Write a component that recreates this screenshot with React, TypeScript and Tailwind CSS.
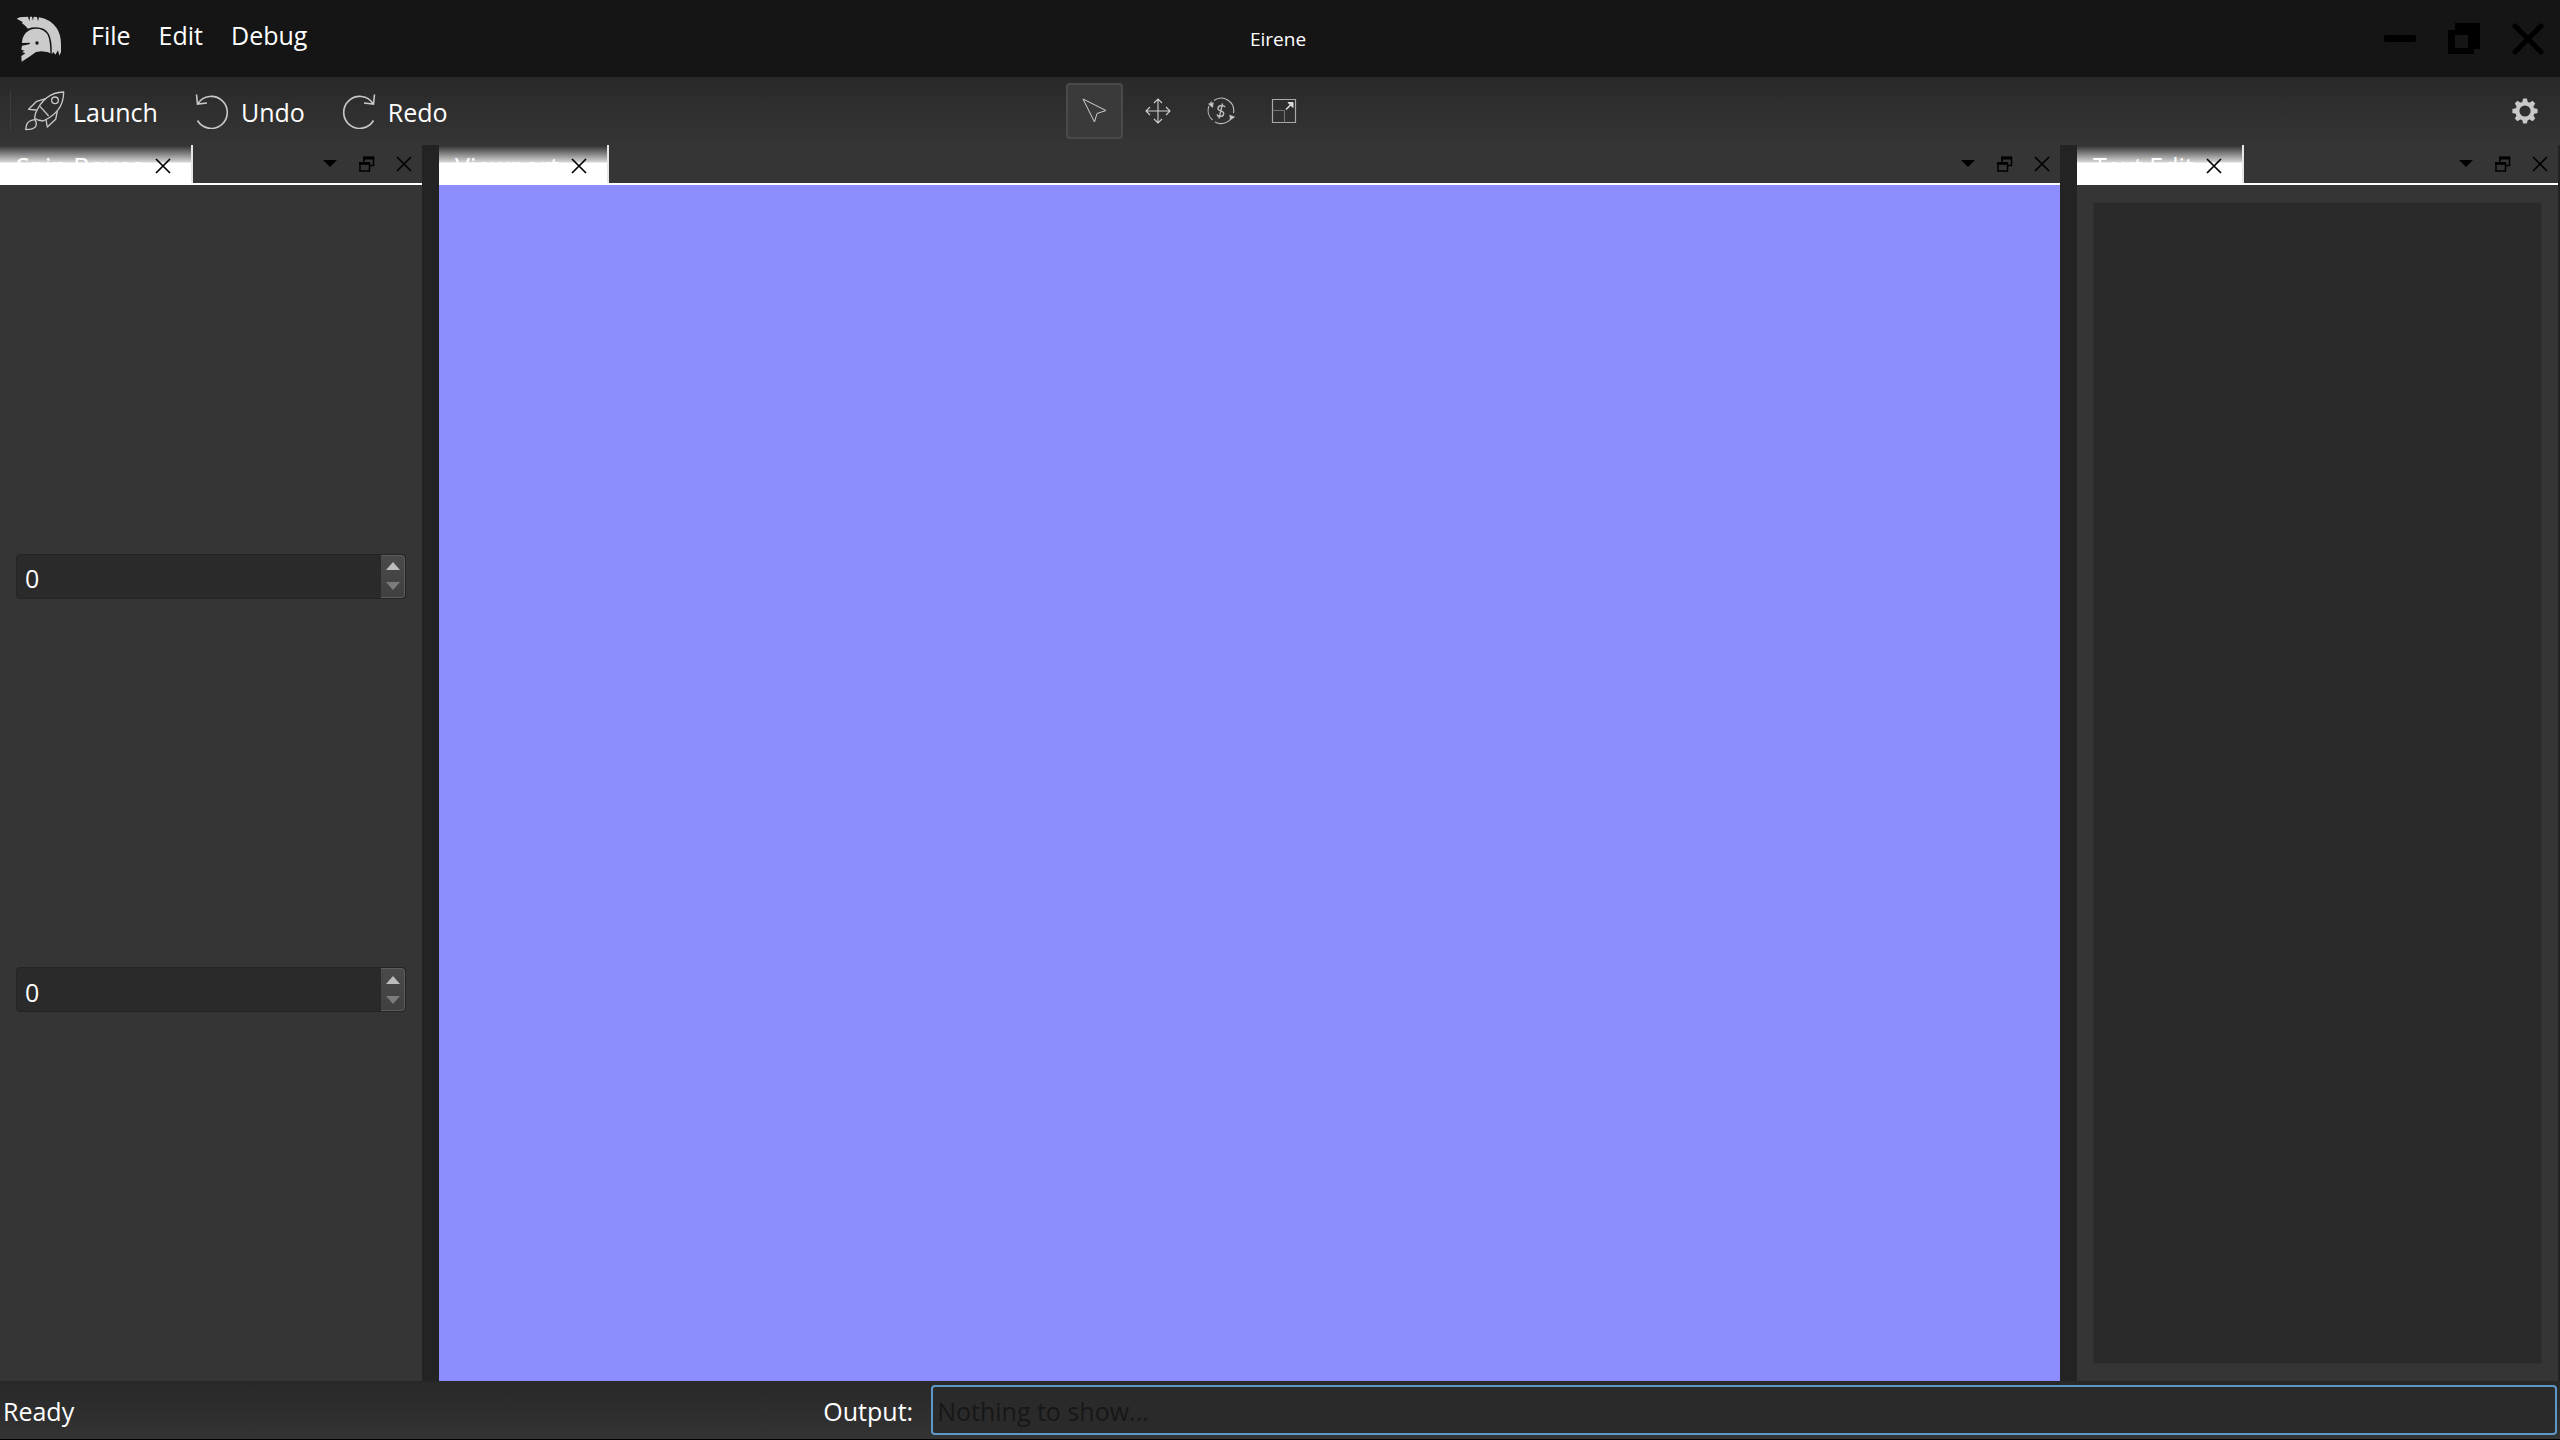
import { useState } from "react";
import type { ReactNode } from "react";

const MENUS = ["File", "Edit", "Debug"];

function HelmetLogo() {
  return (
    <svg width="46" height="46" viewBox="48 46 138 138" aria-hidden="true">
      <path
        fill="#cbcbcb"
        d="M50 54 59 50 84 48 88 62 90 48 96 48 99 60 101 48 111 49 114 62 117 50Q150 55 170 82Q183 102 183 130L183 154 178 165 174 149 166 162 160 154 155 161Q157 118 146 99Q134 80 108 80Q93 80 84 84L74 74 66 68 68 64Z"
      />
      <path
        fill="#cbcbcb"
        d="M65 183 64 166 76 158 66 154 74 150 64 147 66 135 88 131 91 126 66 127Q66 110 77 97Q90 84 108 84Q131 84 142 101Q151 118 151 158L142 154 124 152 108 154 88 168Z"
      />
      <circle cx="111" cy="127" r="5" fill="#151515" />
    </svg>
  );
}

function RocketIcon() {
  return (
    <svg width="40" height="40" viewBox="74 275 120 120" fill="none" stroke="#c8c8c8" strokeWidth="4" strokeLinejoin="round" aria-hidden="true">
      <path d="M190 278Q160 279 139 295Q117 313 105 343L103 357 113 362 128 365Q155 353 172 333Q190 311 190 278Z" />
      <circle cx="164" cy="303" r="10" />
      <path d="M136 298 109 306 85 330 108 332M171 335 166 360 141 383 137 361M119 321 145 350" />
      <path d="M104 361Q86 362 79 375L76 391Q96 391 104 384Q112 376 104 361Z" />
    </svg>
  );
}

function TurnIcon({ flip = false }: { flip?: boolean }) {
  return (
    <svg width="36" height="36" viewBox="0 0 36 36" fill="none" stroke="#c8c8c8" strokeWidth="1.6" className={flip ? "mr-[3px] -scale-x-100" : "mr-[3px]"} aria-hidden="true">
      <path d="M3.5 27.5A16 16 0 1 0 4 10.500M2.500 1.500 3.500 11 13 10" />
    </svg>
  );
}

function SelectIcon() {
  return (
    <svg width="26" height="26" viewBox="0 0 26 26" fill="none" stroke="#d0d0d0" aria-hidden="true">
      <path d="M1 1 24 12.500 15 15.500 12.500 24Z" />
    </svg>
  );
}

function MoveIcon() {
  return (
    <svg width="26" height="26" viewBox="0 0 26 26" fill="none" stroke="#d0d0d0" strokeWidth="1.1" aria-hidden="true">
      <path d="M13 1V25M1 13H25M9 5 13 1 17 5M9 21 13 25 17 21M5 9 1 13 5 17M21 9 25 13 21 17" />
    </svg>
  );
}

function RotateIcon() {
  return (
    <svg width="28" height="28" viewBox="0 0 28 28" fill="none" stroke="#bdbdbd" strokeWidth="1.1" aria-hidden="true">
      <path d="M7 3.500A12.500 12.500 0 0 1 26.500 16M25 20A12.500 12.500 0 0 1 8 25M5.500 23A12.500 12.500 0 0 1 2 9M3.500 6 4.500 4.500" />
      <path d="M2 7 6 6 5.500 10ZM23 18.500 27 20 23.500 22.500Z" fill="#d0d0d0" />
      <path d="M18 10Q17 8.500 14.500 8.500Q11.500 8.500 11 11Q10.500 13 14 14Q17.500 15 16.500 17.500Q16 19.500 13 19.500Q10.500 19.500 10 17.500M15.500 6.500 12 21.500" strokeWidth="1.4" />
    </svg>
  );
}

function ScaleIcon() {
  return (
    <svg width="26" height="26" viewBox="0 0 26 26" fill="none" stroke="#a9a9a9" aria-hidden="true">
      <path d="M1.500 1.500H24.500V24.500H1.500Z" strokeWidth="1.2" />
      <path d="M1.500 12.500H13.500V24.500" stroke="#747474" />
      <path d="M15 11.500 20 6.500" stroke="#dcdcdc" strokeWidth="1.6" />
      <path d="M17 4.500H22V9.500Z" fill="#dcdcdc" stroke="#dcdcdc" />
    </svg>
  );
}

function GearIcon() {
  return (
    <svg width="26" height="26" viewBox="-13 -13 26 26" aria-hidden="true">
      <circle r="7.600" fill="none" stroke="#c8c8c8" strokeWidth="4" />
      {[0, 45, 90, 135, 180, 225, 270, 315].map((angle) => (
        <path key={angle} transform={`rotate(${angle})`} d="M-2.900 -8.500 -1.900 -12.600H1.900L2.900 -8.500Z" fill="#c8c8c8" />
      ))}
    </svg>
  );
}

function CrossIcon() {
  return (
    <svg width="16" height="16" viewBox="0 0 16 16" stroke="#000" strokeWidth="1.7" aria-hidden="true">
      <path d="M1 1 15 15M15 1 1 15" />
    </svg>
  );
}

function ToolButton({ label, active = false, children }: { label: string; active?: boolean; children: ReactNode }) {
  return (
    <button
      type="button"
      aria-label={label}
      aria-pressed={active}
      className={`flex h-14 w-[57px] items-center justify-center rounded-sm border-2 ${
        active ? "border-[#4a4a4a] bg-[#3a3a3a]" : "border-transparent"
      }`}
    >
      {children}
    </button>
  );
}

function ActionButton({ label, children }: { label: string; children: ReactNode }) {
  return (
    <button type="button" className="flex items-center gap-2">
      {children}
      <span className="pt-0.5">{label}</span>
    </button>
  );
}

// Dock header: one tab, then the menu, float and close buttons
function DockHeader({ title }: { title: string }) {
  return (
    <header className="flex h-10 shrink-0 border-b-2 border-white">
      <div className="flex items-center gap-3 border-r-2 border-[#e6e6e6] bg-[linear-gradient(to_bottom,#353535_1px,#d4d4d4_17px,#ffffff_18px)] pt-1 pr-5 pl-4">
        <span>{title}</span>
        <button type="button" aria-label={`Close ${title} tab`}>
          <CrossIcon />
        </button>
      </div>
      <div className="ml-auto flex">
        <button type="button" aria-label="List tabs" className="flex w-[37px] items-center justify-center">
          <svg width="14" height="8" viewBox="0 0 14 8" aria-hidden="true">
            <path d="M0 0H14L7 7Z" />
          </svg>
        </button>
        <button type="button" aria-label="Detach" className="flex w-[37px] items-center justify-center">
          <svg width="16" height="16" viewBox="0 0 16 16" fill="none" stroke="#000" aria-hidden="true">
            <path d="M5 6V1.500H14.500V9.500H11" strokeWidth="1.500" />
            <path d="M4 2H15" strokeWidth="3" />
            <path d="M1 7H10.500V15H1Z" strokeWidth="1.500" />
            <path d="M0 7.500H11" strokeWidth="2.500" />
          </svg>
        </button>
        <button type="button" aria-label="Close panel" className="flex w-[37px] items-center justify-center">
          <CrossIcon />
        </button>
      </div>
    </header>
  );
}

function SpinBox({ label }: { label: string }) {
  const [value, setValue] = useState(0);

  return (
    <div className="flex h-[45px] rounded-sm border border-[#242424] bg-[#2a2a2a]">
      <input
        type="number"
        min={0}
        aria-label={label}
        value={value}
        onChange={(e) => setValue(Number(e.target.value))}
        className="min-w-0 flex-1 appearance-none bg-transparent px-2 pt-1 outline-none [appearance:textfield]"
      />
      <div className="flex w-6 flex-col rounded-r-sm border-y border-r border-[#5c5c5c] bg-linear-to-b from-[#4a4a4a] to-[#404040]">
        <button type="button" aria-label={`Increase ${label}`} onClick={() => setValue(value + 1)} className="flex flex-1 items-end justify-center pb-1">
          <svg width="14" height="8" viewBox="0 0 14 8" aria-hidden="true">
            <path d="M0 8H14L7 0Z" fill="#bcbcbc" />
          </svg>
        </button>
        <button type="button" aria-label={`Decrease ${label}`} onClick={() => setValue(Math.max(0, value - 1))} className="flex flex-1 items-start justify-center pt-2">
          <svg width="14" height="8" viewBox="0 0 14 8" aria-hidden="true">
            <path d="M0 0H14L7 8Z" fill="#7c7c7c" />
          </svg>
        </button>
      </div>
    </div>
  );
}

export default function App() {
  return (
    <div className="flex h-screen flex-col border-b border-black bg-[#353535] font-['Open_Sans','Noto_Sans',sans-serif] text-[25px] leading-8 text-white">
      {/* Title bar */}
      <header className="grid h-[77px] shrink-0 grid-cols-[1fr_auto_1fr] items-center bg-[#151515] pr-1">
        <div className="flex items-center pl-4">
          <HelmetLogo />
          <nav className="flex gap-7 pb-2 pl-[29px]">
            {MENUS.map((menu) => (
              <button type="button" key={menu}>
                {menu}
              </button>
            ))}
          </nav>
        </div>
        <h1 className="text-[19px]">Eirene</h1>
        <div className="flex justify-end gap-8 pr-3">
          <button type="button" aria-label="Minimize">
            <svg width="32" height="32" viewBox="0 0 32 32" aria-hidden="true">
              <rect y="12" width="32" height="7" rx="2" />
            </svg>
          </button>
          <button type="button" aria-label="Restore">
            <svg width="32" height="32" viewBox="0 0 32 32" aria-hidden="true">
              <path fillRule="evenodd" d="M7 0H32V26H26V31H0V7H7ZM7 12V25H20V12Z" />
            </svg>
          </button>
          <button type="button" aria-label="Close">
            <svg width="32" height="32" viewBox="0 0 32 32" stroke="#000" strokeWidth="5" strokeLinecap="round" aria-hidden="true">
              <path d="M3 3 29 29M29 3 3 29" />
            </svg>
          </button>
        </div>
      </header>

      {/* Toolbar */}
      <div className="flex h-[68px] shrink-0 items-center bg-linear-to-b from-[#292929] to-[#353535]">
        <div className="flex w-[41.65%] shrink-0 items-center gap-9 pl-[10px]">
          <div className="-mr-[22px] h-10 w-px bg-[#3d3d3d]" />
          <ActionButton label="Launch">
            <RocketIcon />
          </ActionButton>
          <ActionButton label="Undo">
            <TurnIcon />
          </ActionButton>
          <ActionButton label="Redo">
            <TurnIcon flip />
          </ActionButton>
        </div>
        <div className="flex gap-[6px]">
          <ToolButton label="Select" active>
            <SelectIcon />
          </ToolButton>
          <ToolButton label="Move">
            <MoveIcon />
          </ToolButton>
          <ToolButton label="Rotate">
            <RotateIcon />
          </ToolButton>
          <ToolButton label="Scale">
            <ScaleIcon />
          </ToolButton>
        </div>
        <button type="button" aria-label="Settings" className="mr-[22px] ml-auto">
          <GearIcon />
        </button>
      </div>

      {/* Docks */}
      <main className="flex min-h-0 flex-1">
        <section className="flex w-[422px] shrink-0 flex-col">
          <DockHeader title="Spin Boxes" />
          <div className="flex flex-1 flex-col justify-evenly px-4">
            <SpinBox label="First value" />
            <SpinBox label="Second value" />
          </div>
        </section>
        <div className="w-[17px] shrink-0 bg-[#232323]" />
        <section className="flex min-w-0 flex-1 flex-col">
          <DockHeader title="Viewport" />
          <div className="flex-1 bg-[#8d8dff]" />
        </section>
        <div className="w-[17px] shrink-0 bg-[#232323]" />
        <section className="flex w-[483px] shrink-0 flex-col border-r-2 border-[#222222]">
          <DockHeader title="Text Edit" />
          <div className="flex flex-1 px-4 py-[17px]">
            <textarea aria-label="Text Edit" className="flex-1 resize-none border border-[#303030] bg-[#2a2a2a] p-2 outline-none" />
          </div>
        </section>
      </main>

      {/* Status bar */}
      <footer className="flex h-[58px] shrink-0 items-center bg-linear-to-b from-[#282828] to-[#333333] pr-[3px]">
        <p className="w-[32.2%] shrink-0 pt-0.5 pl-[3px]">Ready</p>
        <label htmlFor="output" className="mr-[18px] pt-0.5">
          Output:
        </label>
        <input
          id="output"
          type="text"
          placeholder="Nothing to show..."
          className="h-[50px] min-w-0 flex-1 rounded-sm border-2 border-[#5c97c8] bg-[#2a2a2a] px-1 pt-0.5 outline-none placeholder:text-[#171717]"
        />
      </footer>
    </div>
  );
}
